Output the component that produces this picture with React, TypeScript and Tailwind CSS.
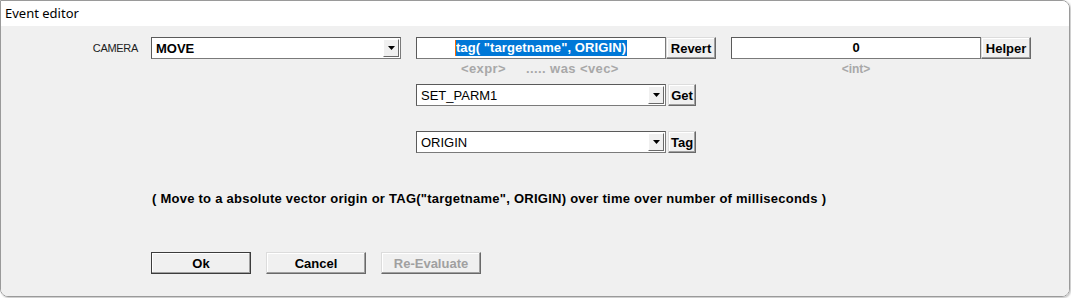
import React from 'react';

const font = { fontFamily: '"Liberation Sans", Arial, sans-serif' };

const Arrow: React.FC = () => (
    <div className="w-[16px] h-full bg-[#f0f0f0] border border-t-white border-l-white border-r-[#696969] border-b-[#696969] flex items-center justify-center">
        <svg width="7" height="4" viewBox="0 0 7 4">
            <path d="M0 0h7L3.5 4z" fill="#000" />
        </svg>
    </div>
);

interface ComboProps {
    value: string;
    bold?: boolean;
}

const Combo: React.FC<ComboProps> = ({ value, bold }) => (
    <div className="w-[250px] h-[22px] bg-white border border-[#7a7a7a] border-t-[#5a5a5a] border-l-[#5a5a5a] flex items-center">
        <span className={`flex-1 pl-[4px] text-[13px] leading-none text-black ${bold ? 'font-bold' : 'font-normal'}`}>{value}</span>
        <div className="h-full py-[1px] pr-[1px]">
            <Arrow />
        </div>
    </div>
);

interface BtnProps {
    label: string;
    w: string;
    disabled?: boolean;
    isDefault?: boolean;
}

const Btn: React.FC<BtnProps> = ({ label, w, disabled, isDefault }) => (
    <button
        className={`${w} h-[22px] bg-[#f0f0f0] text-[13px] font-bold leading-none flex items-center justify-center border ${
            isDefault ? 'border-[#3c3c3c]' : 'border-t-[#dcdcdc] border-l-[#dcdcdc] border-r-[#696969] border-b-[#696969]'
        } shadow-[inset_-1px_-1px_0_#a0a0a0,inset_1px_1px_0_#ffffff] ${disabled ? 'text-[#a0a0a0]' : 'text-black'}`}
    >
        {label}
    </button>
);

export default function App() {
    return (
        <div className="w-[1071px] h-[298px] bg-white" style={font}>
            <div className="w-[1070px] h-[297px] border border-[#9a9a9a] rounded-tr-[8px] rounded-b-[8px] overflow-hidden flex flex-col shadow-[1px_1px_2px_rgba(0,0,0,0.25)]">
                <div className="h-[25px] bg-white flex items-center pl-[4px] shrink-0">
                    <span className="text-[13px] text-black" style={{ fontFamily: '"Noto Sans", "Open Sans", sans-serif' }}>
                        Event editor
                    </span>
                </div>
                <div className="flex-1 bg-[#f0f0f0] pt-[11px]">
                    <div className="flex items-start">
                        <div className="flex items-center">
                            <div className="w-[137px] h-[22px] flex items-center justify-end text-[11px] text-[#202020] tracking-[-0.3px]">
                                CAMERA
                            </div>
                            <div className="ml-[13px]">
                                <Combo value="MOVE" bold />
                            </div>
                        </div>

                        <div className="ml-[15px] flex flex-col">
                            <div className="flex">
                                <div className="w-[250px] h-[22px] bg-white border border-[#7a7a7a] border-t-[#5a5a5a] border-l-[#5a5a5a] flex items-center justify-center">
                                    <span className="relative bg-[#0078d7] text-white text-[13px] font-bold leading-[16px] px-[1px] tracking-[0.1px]">
                                        <span className="absolute left-0 top-0 bottom-0 w-[1px] bg-[#ff6a00]" />
                                        tag( "targetname", ORIGIN)
                                    </span>
                                </div>
                                <Btn label="Revert" w="w-[50px]" />
                            </div>
                            <div className="h-[20px] flex items-center text-[13px] font-bold text-[#a8a8a8] tracking-[0.4px]">
                                <span className="ml-[45px]">&lt;expr&gt;</span>
                                <span className="ml-[20px]">..... was &lt;vec&gt;</span>
                            </div>
                            <div className="mt-[5px] flex items-center gap-[2px]">
                                <Combo value="SET_PARM1" />
                                <Btn label="Get" w="w-[28px]" />
                            </div>
                            <div className="mt-[25px] flex items-center gap-[2px]">
                                <Combo value="ORIGIN" />
                                <Btn label="Tag" w="w-[28px]" />
                            </div>
                        </div>

                        <div className="ml-[15px] flex flex-col">
                            <div className="flex">
                                <div className="w-[250px] h-[22px] bg-white border border-[#7a7a7a] border-t-[#5a5a5a] border-l-[#5a5a5a] flex items-center justify-center text-[13px] font-bold text-black">
                                    0
                                </div>
                                <Btn label="Helper" w="w-[50px]" />
                            </div>
                            <div className="h-[20px] flex items-center justify-center w-[250px] text-[12px] font-bold text-[#a8a8a8]">
                                &lt;int&gt;
                            </div>
                        </div>
                    </div>

                    <div className="mt-[38px] pl-[151px] text-[13px] font-bold leading-[16px] text-black tracking-[0.25px]">
                        ( Move to a absolute vector origin or TAG("targetname", ORIGIN) over time over number of milliseconds )
                    </div>

                    <div className="mt-[45px] pl-[150px] flex gap-[15px]">
                        <Btn label="Ok" w="w-[100px]" isDefault />
                        <Btn label="Cancel" w="w-[100px]" />
                        <Btn label="Re-Evaluate" w="w-[100px]" disabled />
                    </div>
                </div>
            </div>
        </div>
    );
}
